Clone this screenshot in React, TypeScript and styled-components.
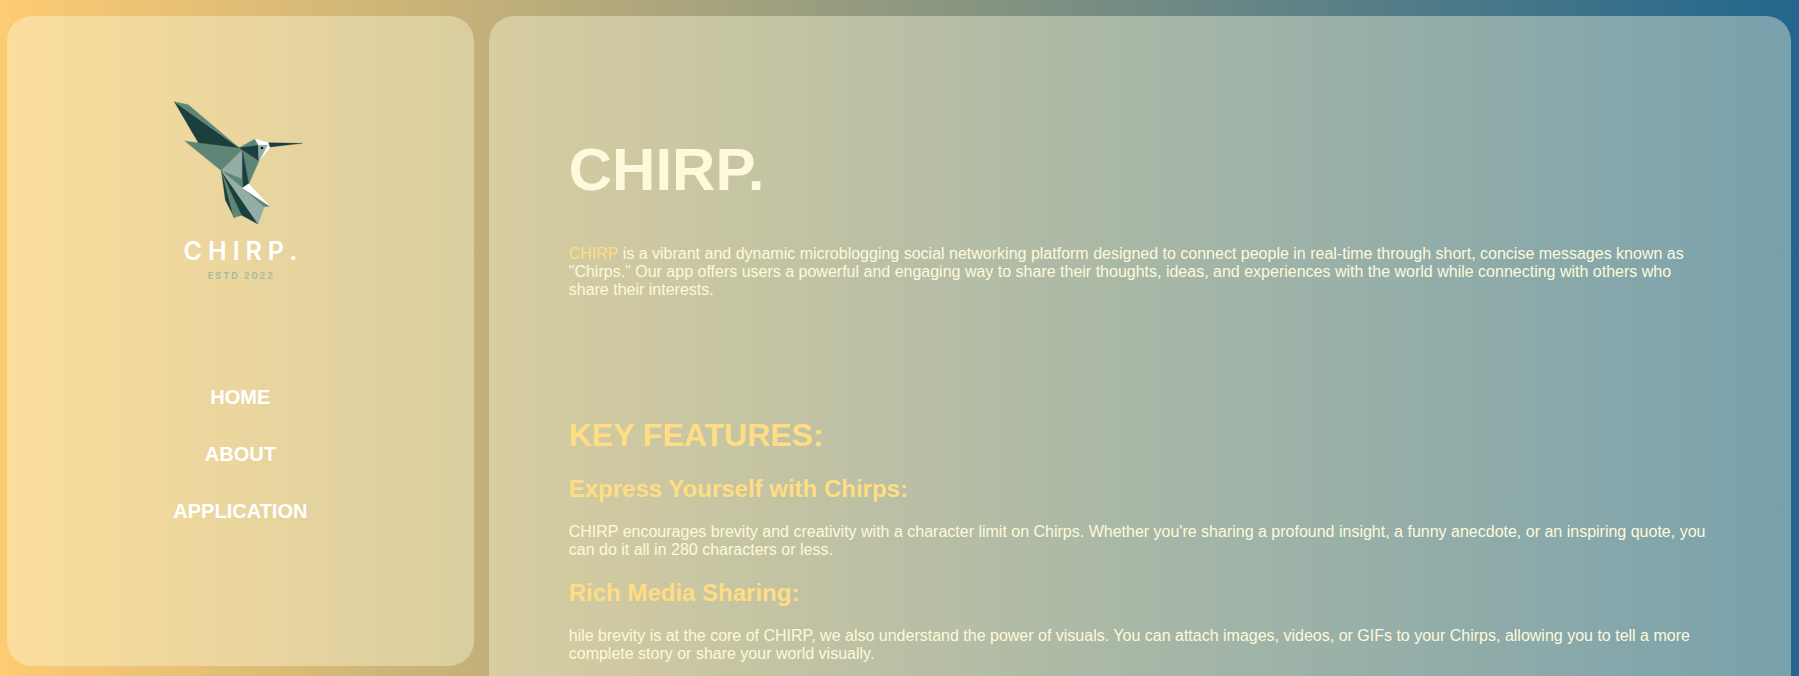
import React from "react";
import styled, { createGlobalStyle } from "styled-components";

const GlobalStyle = createGlobalStyle`
  * { box-sizing: border-box; }
  body {
    margin: 0;
    min-height: 100vh;
    font-family: Arial, "Liberation Sans", sans-serif;
    font-size: 16px;
    line-height: 18px;
    color: #fdfadb;
    background: linear-gradient(to right, #fdcb72, #22668d);
  }
`;

const Page = styled.div`
  display: flex;
  align-items: flex-start;
  gap: 15px;
  height: 100vh;
  padding: 16px 8px 0 7px;
  overflow: hidden;
`;

const panel = `
  background: rgba(250, 250, 221, 0.4);
  border-radius: 25px;
`;

const Sidebar = styled.aside`
  ${panel}
  flex: 0 0 calc(26vw - 1px);
  height: calc(100vh - 26px);
  display: flex;
  flex-direction: column;
  align-items: center;
  padding-top: 84px;
`;

const Logo = styled.a`
  display: flex;
  flex-direction: column;
  align-items: center;
  text-decoration: none;
  color: #fff;
`;

const Bird = styled.svg`
  display: block;
  width: 130px;
  height: 126px;
`;

const LogoName = styled.span`
  margin-top: 13px;
  padding-left: 6px;
  font: 600 25px/24px Inter, sans-serif;
  letter-spacing: 6px;
`;

const LogoDate = styled.span`
  margin-top: 7px;
  padding-left: 2px;
  font: 700 9px/12px Inter, sans-serif;
  letter-spacing: 2px;
  color: #a9bba3;
`;

const Nav = styled.nav`
  display: flex;
  flex-direction: column;
  align-items: center;
  gap: 34px;
  margin-top: 104px;
`;

const NavLink = styled.a`
  font-size: 20px;
  line-height: 23px;
  font-weight: 700;
  color: #fff;
  text-decoration: none;
`;

const Main = styled.main`
  ${panel}
  flex: 1;
  min-width: 0;
  min-height: 100vh;
  padding: 119px 80px 80px;
`;

const Title = styled.h1`
  margin: 0 0 40px;
  font-size: 60px;
  line-height: 70px;
`;

const Text = styled.p`
  margin: 0;
`;

const Highlight = styled.span`
  color: #ffdd85;
`;

const Features = styled.section`
  margin-top: 118px;
`;

const SectionTitle = styled.h2`
  margin: 0 0 22px;
  font-size: 32px;
  line-height: 36px;
  color: #ffdd85;
`;

const Feature = styled.article`
  margin-bottom: 20px;
`;

const FeatureTitle = styled.h3`
  margin: 0 0 20px;
  font-size: 24px;
  line-height: 28px;
  color: #ffdd85;
`;

const dark = "#1a3f3e";
const mid = "#5e8677";
const light = "#93aea4";

const shapes: [string, string][] = [
  [mid, "77,153 118,158 240,172 250,180 187,242"],
  [dark, "46,35 240,173 118,158"],
  [mid, "46,35 88,44 240,173"],
  [mid, "240,173 288,147 300,167 250,180"],
  [mid, "250,180 300,213 269,283 264,281"],
  [dark, "242,173 300,166 300,213 250,180"],
  ["#ffffff", "288,147 328,158 334,172 300,213 299,166"],
  [light, "299,166 326,165 300,213"],
  [light, "250,180 250,268 187,242"],
  [dark, "250,180 269,281 250,295"],
  [dark, "187,242 199,330 226,383 232,330"],
  [mid, "188,244 224,383 248,376"],
  [mid, "187,242 250,267 250,294"],
  [dark, "188,244 248,376 297,402"],
  [light, "188,244 250,294 316,350 297,402"],
  [mid, "250,294 333,349 316,350"],
  ["#ffffff", "250,294 269,281 333,349"],
  [dark, "329,158 430,160 333,171"],
];

const features = [
  {
    title: "Express Yourself with Chirps:",
    text: "CHIRP encourages brevity and creativity with a character limit on Chirps. Whether you're sharing a profound insight, a funny anecdote, or an inspiring quote, you can do it all in 280 characters or less.",
  },
  {
    title: "Rich Media Sharing:",
    text: "hile brevity is at the core of CHIRP, we also understand the power of visuals. You can attach images, videos, or GIFs to your Chirps, allowing you to tell a more complete story or share your world visually.",
  },
];

export default function App() {
  return (
    <>
      <GlobalStyle />
      <Page>
        <Sidebar>
          <Logo href="#">
            <Bird viewBox="48 30 390 378" aria-hidden="true" overflow="visible">
              {shapes.map(([fill, points]) => (
                <polygon
                  key={points}
                  fill={fill}
                  stroke={fill}
                  strokeWidth="1"
                  strokeLinejoin="round"
                  points={points}
                />
              ))}
              <circle cx="309" cy="174" r="4" fill="#111" />
            </Bird>
            <LogoName>CHIRP.</LogoName>
            <LogoDate>ESTD 2022</LogoDate>
          </Logo>
          <Nav>
            <NavLink href="#home">HOME</NavLink>
            <NavLink href="#about">ABOUT</NavLink>
            <NavLink href="#application">APPLICATION</NavLink>
          </Nav>
        </Sidebar>
        <Main>
          <Title>CHIRP.</Title>
          <Text>
            <Highlight>CHIRP</Highlight> is a vibrant and dynamic microblogging social networking
            platform designed to connect people in real-time through short, concise messages known
            as "Chirps." Our app offers users a powerful and engaging way to share their thoughts,
            ideas, and experiences with the world while connecting with others who share their
            interests.
          </Text>
          <Features>
            <SectionTitle>KEY FEATURES:</SectionTitle>
            {features.map((f) => (
              <Feature key={f.title}>
                <FeatureTitle>{f.title}</FeatureTitle>
                <Text>{f.text}</Text>
              </Feature>
            ))}
          </Features>
        </Main>
      </Page>
    </>
  );
}
